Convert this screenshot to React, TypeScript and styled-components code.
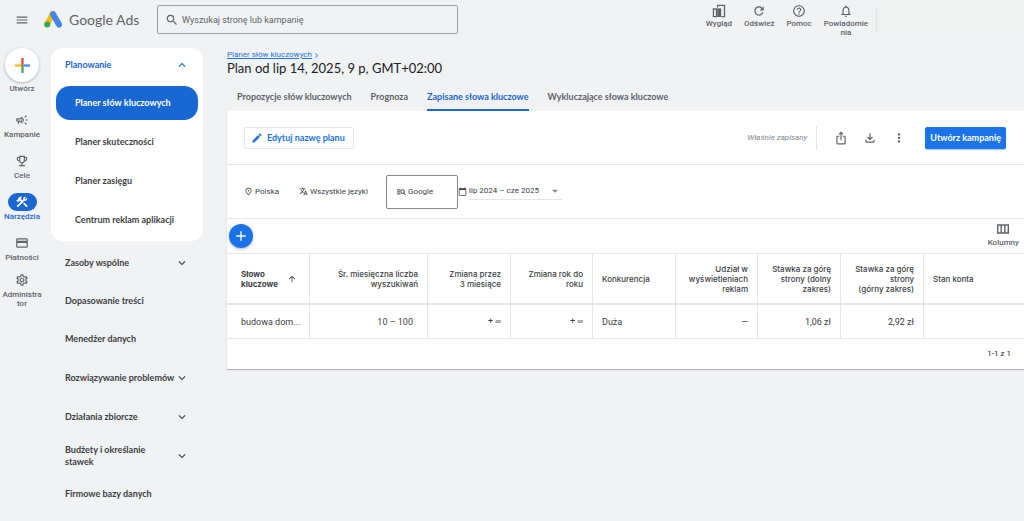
import React from 'react';
import styled, { createGlobalStyle, css } from 'styled-components';
import {
  MdAdd,
  MdArrowDropDown,
  MdArrowUpward,
  MdCalendarToday,
  MdChevronRight,
  MdConstruction,
  MdCreate,
  MdCreditCard,
  MdExpandLess,
  MdExpandMore,
  MdHelpOutline,
  MdIosShare,
  MdMenu,
  MdMoreVert,
  MdNotificationsNone,
  MdOutlineCampaign,
  MdOutlineEmojiEvents,
  MdOutlineFileDownload,
  MdOutlinePlace,
  MdOutlineSettings,
  MdRefresh,
  MdSearch,
  MdTranslate,
} from 'react-icons/md';
import type { IconType } from 'react-icons';

const color = {
  page: '#f0f2f4',
  panel: '#ffffff',
  text: '#3c4043',
  strong: '#202124',
  muted: '#5f6368',
  faint: '#80868b',
  line: '#e4e6e8',
  blue: '#1a73e8',
  deepBlue: '#1967d2',
};

const display = `Lato, 'Liberation Sans', sans-serif`;
const body = `Roboto, 'Liberation Sans', sans-serif`;
const label = `Inter, 'Liberation Sans', sans-serif`;

const GlobalStyle = createGlobalStyle`
  *, *::before, *::after { box-sizing: border-box; }
  body { margin: 0; background: ${color.page}; color: ${color.text}; font: 8px/10px ${body}; }
  button, input, select { font: inherit; color: inherit; }
  button { margin: 0; padding: 0; border: 0; background: none; cursor: pointer; }
  svg { display: block; flex: none; }
`;

const Page = styled.div`
  min-height: 100vh;
`;

/* Top bar */

const TopBar = styled.header`
  display: flex;
  align-items: flex-start;
  height: 44px;
`;

const Brand = styled.div`
  display: flex;
  align-items: center;
  width: 157px;
  height: 39px;
  padding-left: 15px;
`;

const MenuButton = styled.button`
  margin-right: 15px;
  color: ${color.muted};
`;

const BrandLink = styled.a`
  display: flex;
  align-items: center;
  gap: 7px;
  color: ${color.muted};
  font: 14px/18px ${display};
  text-decoration: none;
  white-space: nowrap;
`;

const SearchBox = styled.label`
  display: flex;
  align-items: center;
  gap: 3px;
  flex: 0 1 301px;
  height: 29px;
  margin-top: 5px;
  padding-left: 7px;
  border: 1px solid #9aa0a6;
  border-radius: 2px;
  color: ${color.muted};
`;

const SearchInput = styled.input`
  flex: 1;
  min-width: 0;
  padding: 0;
  border: 0;
  outline: 0;
  background: none;
  font-size: 9px;
  &::placeholder { color: ${color.muted}; opacity: 1; }
`;

const TopActions = styled.div`
  display: flex;
  align-items: flex-start;
  gap: 12px;
  margin-left: auto;
  padding-top: 4px;
`;

const TopAction = styled.button`
  display: flex;
  flex-direction: column;
  align-items: center;
  gap: 1px;
  color: ${color.muted};
  font-weight: 500;
  line-height: 9px;
  white-space: pre-line;
`;

const Account = styled.div`
  width: 148px;
  height: 25px;
  margin: 7px 0 0 8px;
  border-left: 1px solid #e0e3e5;
  background: #eff1f0;
`;

/* Left rail */

const Columns = styled.div`
  display: flex;
  align-items: flex-start;
`;

const Rail = styled.nav`
  display: flex;
  flex-direction: column;
  align-items: center;
  gap: 13px;
  flex: none;
  width: 44px;
  padding-top: 4px;
`;

const RailGroup = styled.div`
  display: grid;
  gap: 9px;
`;

const RailItem = styled.button<{ $active?: boolean }>`
  display: flex;
  flex-direction: column;
  align-items: center;
  gap: 1px;
  width: 42px;
  color: ${(p) => (p.$active ? color.deepBlue : color.muted)};
  font-weight: 500;
  line-height: 9px;
  white-space: pre-line;
`;

const CreateItem = styled(RailItem)`
  margin-bottom: 5px;
`;

const RailIcon = styled.span<{ $active?: boolean }>`
  display: grid;
  place-items: center;
  width: 29px;
  height: 18px;
  border-radius: 9px;
  ${(p) =>
    p.$active &&
    css`
      background: ${color.deepBlue};
      color: #fff;
    `}
`;

const CreateCircle = styled.span`
  display: grid;
  place-items: center;
  width: 34px;
  height: 34px;
  margin-bottom: 1px;
  border-radius: 50%;
  background: #fff;
  box-shadow: 0 1px 3px rgba(60, 64, 67, 0.35);
`;

/* Section navigation */

const SideNav = styled.nav`
  flex: none;
  width: 152px;
  margin-left: 7px;
  padding-top: 4px;
  font: 700 9px/12px ${display};
`;

const NavCard = styled.div`
  margin-bottom: 2px;
  padding: 0 5px 4px;
  border-radius: 12px;
  background: ${color.panel};
`;

const NavHeading = styled.button`
  display: flex;
  align-items: center;
  justify-content: space-between;
  width: 100%;
  height: 34px;
  margin-bottom: 4px;
  padding: 0 9px;
  color: ${color.deepBlue};
`;

const NavChildren = styled.div`
  display: grid;
  gap: 5px;
`;

const NavChild = styled.a<{ $active?: boolean }>`
  display: flex;
  align-items: center;
  height: 34px;
  padding-left: 19px;
  border-radius: 14px;
  background: ${(p) => (p.$active ? color.deepBlue : 'transparent')};
  color: ${(p) => (p.$active ? '#fff' : color.text)};
  text-decoration: none;
  white-space: nowrap;
`;

const NavSection = styled.button<{ $expandable?: boolean }>`
  display: flex;
  align-items: center;
  justify-content: space-between;
  width: 100%;
  height: ${(p) => (p.$expandable ? 39 : 38)}px;
  padding: 0 14px;
  color: ${color.text};
  text-align: left;
  white-space: pre;
`;

/* Main column */

const Main = styled.main`
  flex: 1;
  min-width: 0;
  margin-left: 24px;
  padding-top: 6px;
`;

const Breadcrumb = styled.a`
  display: inline-flex;
  align-items: center;
  color: ${color.blue};
  text-decoration: none;
  span { text-decoration: underline; }
`;

const Title = styled.h1`
  margin: 0;
  color: ${color.strong};
  font: 400 13px/17px ${display};
`;

const Tabs = styled.div`
  display: flex;
  gap: 19px;
  height: 34px;
  padding-left: 10px;
`;

const Tab = styled.button<{ $active?: boolean }>`
  padding-top: 7px;
  border-bottom: 2px solid ${(p) => (p.$active ? color.deepBlue : 'transparent')};
  color: ${(p) => (p.$active ? color.deepBlue : color.muted)};
  font: 700 9px/12px ${display};
  white-space: nowrap;
`;

const Panel = styled.section`
  background: ${color.panel};
  box-shadow: 0 1px 1px rgba(60, 64, 67, 0.35);
`;

const Toolbar = styled.div`
  display: flex;
  align-items: center;
  height: 54px;
  padding: 0 18px 0 17px;
  border-bottom: 1px solid ${color.line};
`;

const EditButton = styled.button`
  display: flex;
  align-items: center;
  gap: 4px;
  height: 22px;
  padding: 0 8px 0 6px;
  border: 1px solid ${color.line};
  border-radius: 2px;
  color: ${color.blue};
  font: 700 9px/12px ${display};
`;

const SavedNote = styled.em`
  height: 24px;
  margin-left: auto;
  padding-right: 9px;
  border-right: 1px solid ${color.line};
  color: ${color.faint};
  line-height: 24px;
`;

const ToolbarIcons = styled.div`
  display: flex;
  gap: 15px;
  margin: 0 19px 0 17px;
  color: ${color.muted};
`;

const PrimaryButton = styled.button`
  height: 22px;
  padding: 0 5px;
  border-radius: 2px;
  background: ${color.blue};
  box-shadow: 0 1px 1px rgba(26, 115, 232, 0.4);
  color: #fff;
  font: 700 9px/12px ${display};
`;

const Filters = styled.div`
  display: flex;
  align-items: center;
  height: 54px;
  padding-left: 17px;
  border-bottom: 1px solid ${color.line};
`;

const Filter = styled.button<{ $width: number; $boxed?: boolean }>`
  display: flex;
  align-items: center;
  gap: 2px;
  width: ${(p) => p.$width}px;
  height: 34px;
  white-space: nowrap;
  ${(p) =>
    p.$boxed &&
    css`
      padding-left: 10px;
      border: 1px solid ${color.faint};
      border-radius: 2px;
    `}
`;

const DateFilter = styled.label`
  display: flex;
  align-items: center;
  gap: 2px;
  color: ${color.text};
`;

const DateField = styled.span`
  display: flex;
  align-items: center;
  width: 93px;
  height: 16px;
  border-bottom: 1px solid ${color.line};
  color: ${color.faint};
`;

const DateSelect = styled.select`
  flex: 1;
  min-width: 0;
  padding: 0;
  border: 0;
  appearance: none;
  background: none;
  color: ${color.text};
`;

const AddBar = styled.div`
  display: flex;
  align-items: center;
  justify-content: space-between;
  height: 34px;
  padding: 0 5px 0 2px;
`;

const AddButton = styled.button`
  display: grid;
  place-items: center;
  width: 24px;
  height: 24px;
  border-radius: 50%;
  background: ${color.blue};
  box-shadow: 0 1px 3px rgba(60, 64, 67, 0.4);
  color: #fff;
`;

const ColumnsButton = styled.button`
  display: flex;
  flex-direction: column;
  align-items: center;
  gap: 4px;
  color: ${color.muted};
  font-weight: 500;
`;

const Table = styled.table`
  width: 100%;
  table-layout: fixed;
  border-collapse: separate;
  border-spacing: 0;
`;

const Col = styled.col<{ $width?: number }>`
  width: ${(p) => (p.$width ? `${p.$width}px` : 'auto')};
`;

const cell = css<{ $right?: boolean }>`
  padding: 0 9px;
  border-right: 1px solid ${color.line};
  text-align: ${(p) => (p.$right ? 'right' : 'left')};
  &:first-child { padding-left: 14px; }
  &:last-child { border-right: 0; }
`;

const HeadCell = styled.th<{ $right?: boolean; $bold?: boolean }>`
  ${cell}
  height: 52px;
  border-top: 1px solid ${color.line};
  border-bottom: 2px solid ${color.line};
  font: ${(p) => (p.$bold ? 700 : 500)} 8px/10px ${label};
  white-space: pre-line;
`;

const SortLabel = styled.span`
  display: flex;
  align-items: center;
  justify-content: space-between;
  padding-right: 3px;
`;

const Cell = styled.td<{ $right?: boolean; $inset?: boolean }>`
  ${cell}
  height: 34px;
  border-bottom: 1px solid ${color.line};
  font-size: 9px;
  white-space: nowrap;
  ${(p) => p.$inset && 'padding-right: 14px;'}
`;

const InfinitySign = styled.span`
  font: 500 8px/10px 'Liberation Sans', sans-serif;
`;

const Pager = styled.div`
  height: 30px;
  padding-right: 13px;
  color: ${color.strong};
  line-height: 30px;
  text-align: right;
`;

/* Drawn icons */

const AdsLogo = () => (
  <svg width="18" height="17" viewBox="0 0 18 17" aria-hidden="true">
    <path d="M8.4 3 3.4 13" stroke="#fbbc04" strokeWidth="5.8" strokeLinecap="round" />
    <path d="M9.1 3.2 15 13.6" stroke="#4285f4" strokeWidth="6" strokeLinecap="round" />
    <circle cx="3.2" cy="13.5" r="3" fill="#34a853" />
  </svg>
);

const ColorPlus = () => (
  <svg width="15" height="15" viewBox="0 0 15 15" aria-hidden="true">
    <path d="M6.4 0h2.2v6.4H6.4z" fill="#ea4335" />
    <path d="M8.6 6.4H15v2.2H8.6z" fill="#4285f4" />
    <path d="M6.4 6.4h2.2V15H6.4z" fill="#34a853" />
    <path d="M0 6.4h6.4v2.2H0z" fill="#fbbc04" />
    <path d="M6.4 6.4h2.2L6.4 8.6z" fill="#ea4335" />
  </svg>
);

const AppearanceIcon = () => (
  <svg width="14" height="14" viewBox="0 0 14 14" fill="none" stroke="currentColor" strokeWidth="1.3" aria-hidden="true">
    <path d="M5.6 3.5V1.4h6.9v11.2h-3M4.5 5H1.4v7.6h3.1z" />
    <path d="M5.2 4.4h4v8.6h-4z" fill="currentColor" stroke="none" />
  </svg>
);

const NetworkIcon = () => (
  <svg width="9" height="8" viewBox="0 0 9 8" fill="none" stroke="currentColor" aria-hidden="true">
    <path d="M0 1.9h3.6M0 3.9h3M0 5.9h3.6M6.9 5l1.6 1.9" />
    <circle cx="5.6" cy="3.6" r="1.8" />
  </svg>
);

const ColumnsIcon = () => (
  <svg width="12" height="10" viewBox="0 0 12 10" fill="none" stroke="currentColor" strokeWidth="1.4" aria-hidden="true">
    <path d="M.7 1h10.6v8H.7zM4.2 1v8M7.8 1v8" />
  </svg>
);

type RailEntry = { label: string; Icon: IconType; active?: boolean };

const workItems: RailEntry[] = [
  { label: 'Kampanie', Icon: MdOutlineCampaign },
  { label: 'Cele', Icon: MdOutlineEmojiEvents },
  { label: 'Narzędzia', Icon: MdConstruction, active: true },
];

const accountItems: RailEntry[] = [
  { label: 'Płatności', Icon: MdCreditCard },
  { label: 'Administra\ntor', Icon: MdOutlineSettings },
];

const RailEntryButton = ({ label: text, Icon, active }: RailEntry) => (
  <RailItem $active={active}>
    <RailIcon $active={active}><Icon size={14} /></RailIcon>
    {text}
  </RailItem>
);

const planning = ['Planer słów kluczowych', 'Planer skuteczności', 'Planer zasięgu', 'Centrum reklam aplikacji'];

const sections = [
  { label: 'Zasoby wspólne', expandable: true },
  { label: 'Dopasowanie treści' },
  { label: 'Menedżer danych' },
  { label: 'Rozwiązywanie problemów', expandable: true },
  { label: 'Działania zbiorcze', expandable: true },
  { label: 'Budżety i określanie\nstawek', expandable: true },
  { label: 'Firmowe bazy danych' },
];

const tabs = ['Propozycje słów kluczowych', 'Prognoza', 'Zapisane słowa kluczowe', 'Wykluczające słowa kluczowe'];

const infinite = <>+ <InfinitySign>∞</InfinitySign></>;

const columns = [
  { label: 'Śr. miesięczna liczba\nwyszukiwań', value: '10 – 100', width: 118, right: true, inset: true },
  { label: 'Zmiana przez\n3 miesiące', value: infinite, width: 83, right: true },
  { label: 'Zmiana rok do\nroku', value: infinite, width: 82, right: true },
  { label: 'Konkurencja', value: 'Duża', width: 83 },
  { label: 'Udział w\nwyświetleniach\nreklam', value: '—', width: 82, right: true },
  { label: 'Stawka za górę\nstrony (dolny\nzakres)', value: '1,06 zł', width: 83, right: true },
  { label: 'Stawka za górę\nstrony\n(górny zakres)', value: '2,92 zł', width: 83, right: true },
  { label: 'Stan konta', value: '' },
];

export default function App() {
  return (
    <Page>
      <GlobalStyle />
      <TopBar>
        <Brand>
          <MenuButton aria-label="Menu"><MdMenu size={14} /></MenuButton>
          <BrandLink href="#"><AdsLogo />Google Ads</BrandLink>
        </Brand>
        <SearchBox>
          <MdSearch size={14} />
          <SearchInput type="search" aria-label="Wyszukaj" placeholder="Wyszukaj stronę lub kampanię" />
        </SearchBox>
        <TopActions>
          <TopAction><AppearanceIcon />Wygląd</TopAction>
          <TopAction><MdRefresh size={14} />Odśwież</TopAction>
          <TopAction><MdHelpOutline size={14} />Pomoc</TopAction>
          <TopAction><MdNotificationsNone size={14} />{'Powiadomie\nnia'}</TopAction>
        </TopActions>
        <Account />
      </TopBar>

      <Columns>
        <Rail>
          <CreateItem><CreateCircle><ColorPlus /></CreateCircle>Utwórz</CreateItem>
          {workItems.map((item) => <RailEntryButton key={item.label} {...item} />)}
          <RailGroup>
            {accountItems.map((item) => <RailEntryButton key={item.label} {...item} />)}
          </RailGroup>
        </Rail>

        <SideNav>
          <NavCard>
            <NavHeading>Planowanie<MdExpandLess size={14} /></NavHeading>
            <NavChildren>
              {planning.map((text, i) => (
                <NavChild key={text} href="#" $active={i === 0}>{text}</NavChild>
              ))}
            </NavChildren>
          </NavCard>
          {sections.map((s) => (
            <NavSection key={s.label} $expandable={s.expandable}>
              {s.label}
              {s.expandable && <MdExpandMore size={14} />}
            </NavSection>
          ))}
        </SideNav>

        <Main>
          <Breadcrumb href="#"><span>Planer słów kluczowych</span><MdChevronRight size={9} /></Breadcrumb>
          <Title>Plan od lip 14, 2025, 9 p, GMT+02:00</Title>
          <Tabs role="tablist">
            {tabs.map((text, i) => (
              <Tab key={text} role="tab" aria-selected={i === 2} $active={i === 2}>{text}</Tab>
            ))}
          </Tabs>
          <Panel>
            <Toolbar>
              <EditButton><MdCreate size={12} />Edytuj nazwę planu</EditButton>
              <SavedNote>Właśnie zapisany</SavedNote>
              <ToolbarIcons>
                <button aria-label="Udostępnij"><MdIosShare size={14} /></button>
                <button aria-label="Pobierz"><MdOutlineFileDownload size={14} /></button>
                <button aria-label="Więcej"><MdMoreVert size={14} /></button>
              </ToolbarIcons>
              <PrimaryButton>Utwórz kampanię</PrimaryButton>
            </Toolbar>
            <Filters>
              <Filter $width={55}><MdOutlinePlace size={9} />Polska</Filter>
              <Filter $width={87}><MdTranslate size={9} />Wszystkie języki</Filter>
              <Filter $width={72} $boxed><NetworkIcon />Google</Filter>
              <DateFilter>
                <MdCalendarToday size={9} />
                <DateField>
                  <DateSelect aria-label="Zakres dat"><option>lip 2024 – cze 2025</option></DateSelect>
                  <MdArrowDropDown size={14} />
                </DateField>
              </DateFilter>
            </Filters>
            <AddBar>
              <AddButton aria-label="Dodaj"><MdAdd size={16} /></AddButton>
              <ColumnsButton><ColumnsIcon />Kolumny</ColumnsButton>
            </AddBar>
            <Table>
              <colgroup>
                <Col $width={83} />
                {columns.map((c) => <Col key={c.label} $width={c.width} />)}
              </colgroup>
              <thead>
                <tr>
                  <HeadCell $bold>
                    <SortLabel>{'Słowo\nkluczowe'}<MdArrowUpward size={10} /></SortLabel>
                  </HeadCell>
                  {columns.map((c) => <HeadCell key={c.label} $right={c.right}>{c.label}</HeadCell>)}
                </tr>
              </thead>
              <tbody>
                <tr>
                  <Cell>budowa dom...</Cell>
                  {columns.map((c) => <Cell key={c.label} $right={c.right} $inset={c.inset}>{c.value}</Cell>)}
                </tr>
              </tbody>
            </Table>
            <Pager>1-1 z 1</Pager>
          </Panel>
        </Main>
      </Columns>
    </Page>
  );
}
